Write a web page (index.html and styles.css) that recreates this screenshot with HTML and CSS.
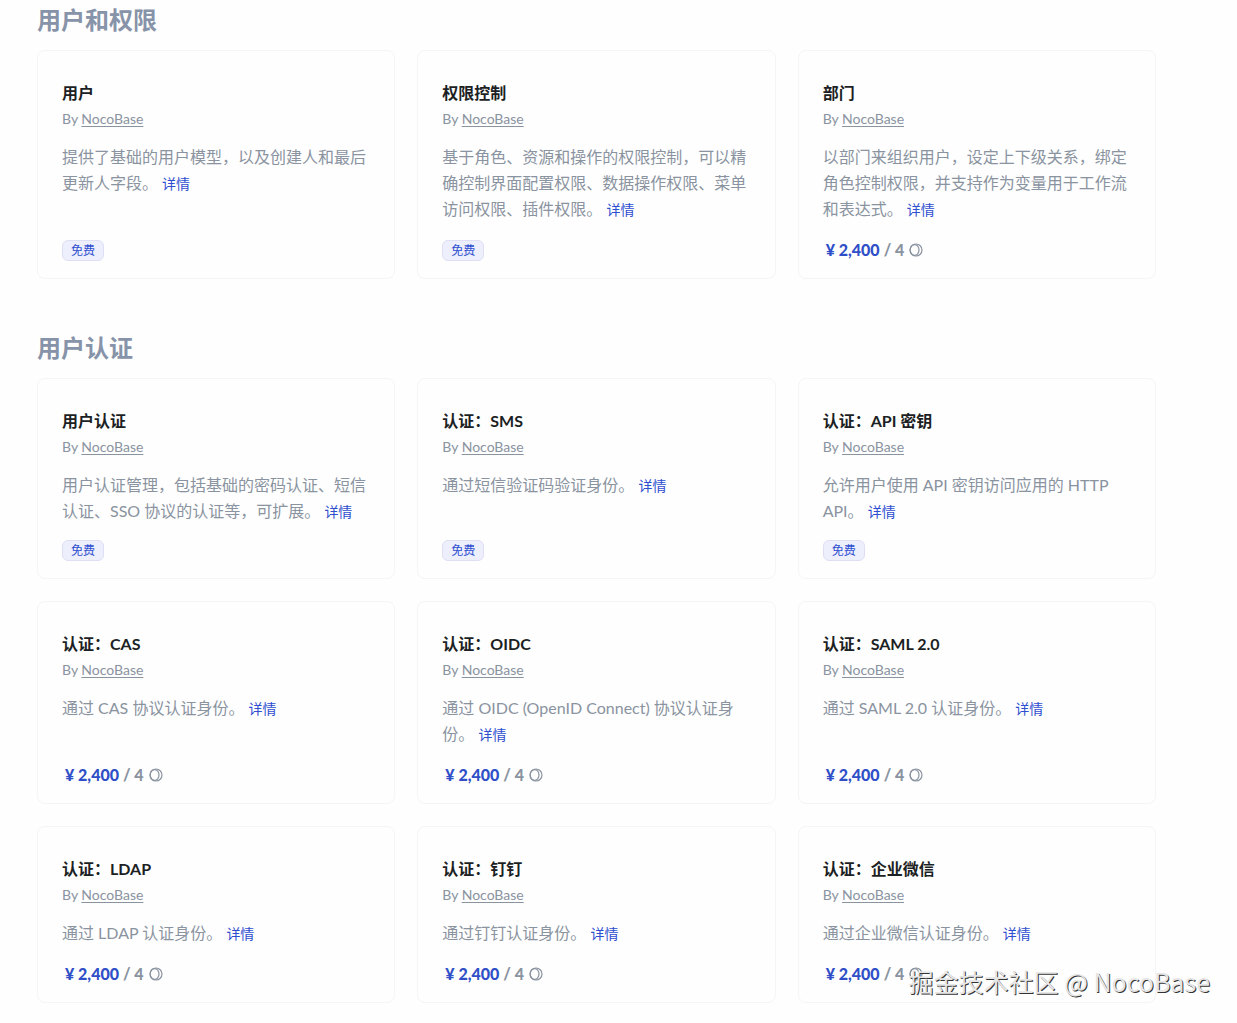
FILE: index.html
```html
<!DOCTYPE html>
<html lang="zh-CN">
<head>
    <meta charset="UTF-8">
    <meta name="viewport" content="width=device-width, initial-scale=1.0">
    <title>NocoBase 插件</title>
    <link rel="stylesheet" href="styles.css">
</head>
<body>
    <svg class="sprite" aria-hidden="true">
        <symbol id="coin" viewBox="0 0 16 16">
            <circle cx="8" cy="8" r="6"/>
            <ellipse cx="6.6" cy="8" rx="4.4" ry="5.4"/>
        </symbol>
    </svg>

    <main class="plugins">
        <section class="group">
            <h2>用户和权限</h2>
            <div class="cards">
                <article class="card">
                    <h3>用户</h3>
                    <p class="author">By <a href="#">NocoBase</a></p>
                    <p class="desc">提供了基础的用户模型，以及创建人和最后更新人字段。 <a href="#">详情</a></p>
                    <div class="footer"><span class="badge">免费</span></div>
                </article>
                <article class="card">
                    <h3>权限控制</h3>
                    <p class="author">By <a href="#">NocoBase</a></p>
                    <p class="desc">基于角色、资源和操作的权限控制，可以精确控制界面配置权限、数据操作权限、菜单访问权限、插件权限。 <a href="#">详情</a></p>
                    <div class="footer"><span class="badge">免费</span></div>
                </article>
                <article class="card">
                    <h3>部门</h3>
                    <p class="author">By <a href="#">NocoBase</a></p>
                    <p class="desc">以部门来组织用户，设定上下级关系，绑定角色控制权限，并支持作为变量用于工作流和表达式。 <a href="#">详情</a></p>
                    <div class="footer price"><strong>¥ 2,400</strong> <span>/ 4</span> <svg class="coin"><use href="#coin"/></svg></div>
                </article>
            </div>
        </section>

        <section class="group">
            <h2>用户认证</h2>
            <div class="cards">
                <article class="card">
                    <h3>用户认证</h3>
                    <p class="author">By <a href="#">NocoBase</a></p>
                    <p class="desc">用户认证管理，包括基础的密码认证、短信认证、SSO 协议的认证等，可扩展。 <a href="#">详情</a></p>
                    <div class="footer"><span class="badge">免费</span></div>
                </article>
                <article class="card">
                    <h3>认证：SMS</h3>
                    <p class="author">By <a href="#">NocoBase</a></p>
                    <p class="desc">通过短信验证码验证身份。 <a href="#">详情</a></p>
                    <div class="footer"><span class="badge">免费</span></div>
                </article>
                <article class="card">
                    <h3>认证：API 密钥</h3>
                    <p class="author">By <a href="#">NocoBase</a></p>
                    <p class="desc">允许用户使用 API 密钥访问应用的 HTTP API。 <a href="#">详情</a></p>
                    <div class="footer"><span class="badge">免费</span></div>
                </article>
                <article class="card">
                    <h3>认证：CAS</h3>
                    <p class="author">By <a href="#">NocoBase</a></p>
                    <p class="desc">通过 CAS 协议认证身份。 <a href="#">详情</a></p>
                    <div class="footer price"><strong>¥ 2,400</strong> <span>/ 4</span> <svg class="coin"><use href="#coin"/></svg></div>
                </article>
                <article class="card">
                    <h3>认证：OIDC</h3>
                    <p class="author">By <a href="#">NocoBase</a></p>
                    <p class="desc">通过 OIDC (OpenID Connect) 协议认证身份。 <a href="#">详情</a></p>
                    <div class="footer price"><strong>¥ 2,400</strong> <span>/ 4</span> <svg class="coin"><use href="#coin"/></svg></div>
                </article>
                <article class="card">
                    <h3>认证：SAML 2.0</h3>
                    <p class="author">By <a href="#">NocoBase</a></p>
                    <p class="desc">通过 SAML 2.0 认证身份。 <a href="#">详情</a></p>
                    <div class="footer price"><strong>¥ 2,400</strong> <span>/ 4</span> <svg class="coin"><use href="#coin"/></svg></div>
                </article>
                <article class="card">
                    <h3>认证：LDAP</h3>
                    <p class="author">By <a href="#">NocoBase</a></p>
                    <p class="desc">通过 LDAP 认证身份。 <a href="#">详情</a></p>
                    <div class="footer price"><strong>¥ 2,400</strong> <span>/ 4</span> <svg class="coin"><use href="#coin"/></svg></div>
                </article>
                <article class="card">
                    <h3>认证：钉钉</h3>
                    <p class="author">By <a href="#">NocoBase</a></p>
                    <p class="desc">通过钉钉认证身份。 <a href="#">详情</a></p>
                    <div class="footer price"><strong>¥ 2,400</strong> <span>/ 4</span> <svg class="coin"><use href="#coin"/></svg></div>
                </article>
                <article class="card">
                    <h3>认证：企业微信</h3>
                    <p class="author">By <a href="#">NocoBase</a></p>
                    <p class="desc">通过企业微信认证身份。 <a href="#">详情</a></p>
                    <div class="footer price"><strong>¥ 2,400</strong> <span>/ 4</span> <svg class="coin"><use href="#coin"/></svg></div>
                </article>
            </div>
        </section>
    </main>

    <div class="watermark">掘金技术社区 @ NocoBase</div>
</body>
</html>
```
FILE: styles.css
```css
* {
    box-sizing: border-box;
}

body {
    margin: 0;
    background-color: #fefefe;
    color: #8a93a0;
    font-family: Lato, "Noto Sans CJK SC", sans-serif;
    font-size: 16px;
    line-height: 26px;
}

h2, h3, p {
    margin: 0;
}

.sprite {
    display: none;
}

.plugins {
    padding: 2px 81px 20px 37px;
}

.group {
    margin-bottom: 51px;
}

.group:last-child {
    margin-bottom: 0;
}

h2 {
    margin-bottom: 12px;
    font-size: 24px;
    line-height: 36px;
    font-weight: 700;
    color: #8793a8;
}

.cards {
    display: grid;
    grid-template-columns: repeat(3, 1fr);
    gap: 22px;
}

.card {
    display: flex;
    flex-direction: column;
    padding: 29px 24px 15px;
    border: 1px solid #f5f5f7;
    border-radius: 8px;
}

h3 {
    font-size: 16px;
    font-weight: 700;
    color: #1c1f23;
}

.author {
    font-size: 14px;
}

.author a {
    color: inherit;
    text-underline-offset: 2px;
}

.desc {
    margin: 12px 0 14px;
}

.desc a {
    font-size: 14px;
    line-height: 16px;
    color: #2f4fd0;
    text-decoration: none;
}

.footer {
    display: flex;
    align-items: center;
    height: 25px;
    margin-top: auto;
}

.badge {
    padding: 0 8px;
    border: 1px solid #dedff4;
    border-radius: 6px;
    background-color: #eeeffc;
    color: #2f4fd0;
    font-size: 12px;
    line-height: 19px;
}

.price {
    gap: 4px;
    height: 27px;
    padding-left: 3px;
    font-weight: 900;
}

.price strong {
    font-weight: 900;
    color: #2f4fc8;
}

.coin {
    width: 16px;
    height: 16px;
    fill: none;
    stroke: #8a93a0;
    stroke-width: 1.2;
}

.watermark {
    position: absolute;
    right: 27px;
    bottom: 24px;
    color: #e6e6e6;
    font-family: "Noto Sans CJK SC", sans-serif;
    font-size: 25px;
    line-height: 36px;
    text-shadow: 1px 1px 0 #333;
}
```
